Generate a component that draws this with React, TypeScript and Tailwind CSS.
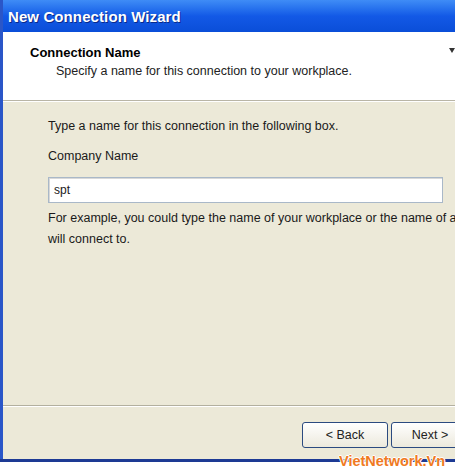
export default function App() {
  const font = { fontFamily: '"Liberation Sans", Arial, sans-serif' };
  return (
    <div className="relative h-[472px] w-[455px] overflow-hidden bg-white" style={font}>
      <div className="flex h-[459px] flex-col border-l-[3px] border-l-[#2a56c8]">
        {/* Title bar */}
        <div className="flex h-[32px] shrink-0 items-center bg-gradient-to-b from-[#3f8cf6] via-[#1359e6] to-[#0a4ed8] pl-[5px] pt-[3px]">
          <span className="text-[15px] font-bold tracking-[0.1px] text-white [text-shadow:1px_1px_0_#0a2a8a]">
            New Connection Wizard
          </span>
        </div>

        {/* Header */}
        <div className="relative h-[69px] shrink-0 border-b border-b-[#b9b5a6] bg-white pl-[27px] pt-[13px]">
          <div className="text-[13px] font-bold leading-[16px] text-black">Connection Name</div>
          <div className="mt-[3px] pl-[26px] text-[12.5px] leading-[15px] text-[#222]">
            Specify a name for this connection to your workplace.
          </div>
          <div className="absolute right-0 top-[16px] h-0 w-0 border-x-[3px] border-t-[5px] border-x-transparent border-t-[#333]" />
        </div>

        {/* Body */}
        <div className="flex flex-1 flex-col border-t border-t-white bg-[#ece9d8]">
          <div className="flex-1 pl-[45px] pt-[17px] text-[12.5px] leading-[15px] text-[#1a1a1a]">
            <div>Type a name for this connection in the following box.</div>
            <div className="mt-[15px]">Company Name</div>
            <div className="mt-[13px] flex h-[26px] w-[395px] items-center border border-[#a9b8c8] bg-white pl-[5px] text-[12px] shadow-[inset_1px_1px_0_#d8d8d8]">
              spt
            </div>
            <div className="mt-[5px] whitespace-nowrap leading-[21px]">
              For example, you could type the name of your workplace or the name of a
              <br />
              will connect to.
            </div>
          </div>

          <div className="h-[2px] shrink-0 border-t border-t-[#b3b09f] border-b border-b-white" />

          <div className="flex h-[52px] shrink-0 justify-end gap-[3px] pt-[15px]">
            <button className="h-[26px] w-[86px] rounded-[3px] border border-[#2b4a80] bg-gradient-to-b from-white to-[#ece9dc] text-[12.5px] text-[#222]">
              &lt; Back
            </button>
            <button className="-mr-[22px] h-[26px] w-[86px] rounded-[3px] border border-[#2b4a80] bg-gradient-to-b from-white to-[#ece9dc] pr-[8px] text-[12.5px] text-[#222]">
              Next &gt;
            </button>
          </div>
        </div>
      </div>
      <div className="h-[3px] w-full bg-[#1d3a94]" />

      {/* Watermark */}
      <div className="absolute left-[339px] top-[451px] text-[14.5px] font-bold text-[#f07a22] [text-shadow:1px_0_0_#fff,-1px_0_0_#fff,0_1px_0_#fff,0_-1px_0_#fff]">
        VietNetwork.Vn
      </div>
    </div>
  );
}
